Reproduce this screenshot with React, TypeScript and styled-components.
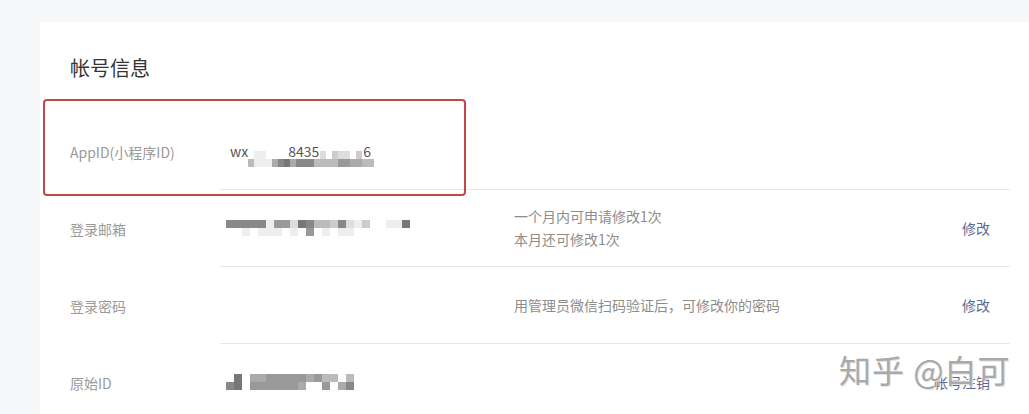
import React from "react";
import styled, { createGlobalStyle } from "styled-components";

const Global = createGlobalStyle`
  html, body { margin: 0; padding: 0; background: #f6f7f9; }
  body { font-family: "Noto Sans CJK SC", "Noto Sans", "Liberation Sans", sans-serif; }
  #root { min-height: 414px; }
`;

const Page = styled.div`
  position: relative;
  display: flex;
  height: 414px;
  overflow: hidden;
  padding: 22px 0 0 40px;
  box-sizing: border-box;
`;

const Card = styled.section`
  position: relative;
  flex: 1;
  background: #ffffff;
  padding: 32px 19px 0 30px;
`;

const Title = styled.h2`
  margin: 0 0 31px;
  font-size: 20px;
  line-height: 28px;
  font-weight: 400;
  color: #353535;
`;

const Row = styled.div`
  display: grid;
  grid-template-columns: 150px 1fr;
  height: 77px;
`;

const Label = styled.div`
  display: flex;
  align-items: center;
  font-size: 14px;
  color: #9a9a9a;
`;

const Content = styled.div`
  display: grid;
  grid-template-columns: 288px 1fr auto;
  align-items: center;
  padding: 0 20px 0 6px;
  border-bottom: 1px solid #e7e7e7;
`;

const Value = styled.div`
  position: relative;
  font-size: 14px;
  color: #353535;
  display: flex;
  align-items: center;
`;

const Tips = styled.div`
  font-size: 14px;
  line-height: 23px;
  color: #8d8d8d;
`;

const Action = styled.a`
  font-size: 14px;
  color: #576b95;
  text-decoration: none;
  cursor: pointer;
`;

const Highlight = styled.div`
  position: absolute;
  left: 3px;
  top: 77px;
  width: 423px;
  height: 97px;
  box-sizing: border-box;
  border: 2px solid #c2484a;
  border-radius: 4px;
  pointer-events: none;
`;

const Watermark = styled.div`
  position: absolute;
  left: 839px;
  top: 349px;
  font-size: 32px;
  line-height: 40px;
  letter-spacing: 1px;
  color: #a9a9a9;
  text-shadow: 1px 1px 0 #e2e2e2, -1px -1px 0 #ffffff;
  white-space: pre;
  pointer-events: none;
`;

const MosaicGrid = styled.div<{ $w: number; $h: number; $cols: number }>`
  display: grid;
  grid-template-columns: repeat(${(p) => p.$cols}, ${(p) => p.$w}px);
  grid-auto-rows: ${(p) => p.$h}px;
`;

const MosaicOverlay = styled(MosaicGrid)`
  position: absolute;
  left: 0;
  top: 10px;
`;

const Cell = styled.span<{ $c: string }>`
  background: ${(p) => (p.$c === " " ? "transparent" : `#${p.$c.repeat(6)}`)};
`;

const Frag = styled.span<{ $ml: number }>`
  margin-left: ${(p) => p.$ml}px;
  color: #555;
  font-size: 14px;
  line-height: 20px;
`;

function cellsOf(rows: string[]) {
  const cols = Math.max(...rows.map((r) => r.length));
  const cells: React.ReactNode[] = [];
  rows.forEach((r, ri) => {
    r.padEnd(cols, " ")
      .split("")
      .forEach((c, ci) => cells.push(<Cell key={`${ri}-${ci}`} $c={c} />));
  });
  return { cols, cells };
}

function Mosaic({ rows, w = 8, h = 8 }: { rows: string[]; w?: number; h?: number }) {
  const { cols, cells } = cellsOf(rows);
  return (
    <MosaicGrid $w={w} $h={h} $cols={cols}>
      {cells}
    </MosaicGrid>
  );
}

function AppIdValue() {
  const { cols, cells } = cellsOf([
    "    ee         d cdd c  ",
    "fffbeeea87a888bbbb99aabb",
  ]);
  return (
    <Value>
      <Frag $ml={4}>wx</Frag>
      <Frag $ml={40}>8435</Frag>
      <Frag $ml={44}>6</Frag>
      <MosaicOverlay $w={6} $h={8} $cols={cols} style={{ left: 4 }}>
        {cells}
      </MosaicOverlay>
    </Value>
  );
}

export default function App() {
  return (
    <>
      <Global />
      <Page>
        <Card>
          <Title>帐号信息</Title>
          <Row>
            <Label>AppID(小程序ID)</Label>
            <Content>
              <AppIdValue />
            </Content>
          </Row>
          <Row>
            <Label>登录邮箱</Label>
            <Content>
              <Value>
                <Mosaic
                  rows={["88888e99d78bbc8dec  ee7", "ffefeeefef9fefeefff    "]}
                />
              </Value>
              <Tips>
                一个月内可申请修改1次
                <br />
                本月还可修改1次
              </Tips>
              <Action>修改</Action>
            </Content>
          </Row>
          <Row>
            <Label>登录密码</Label>
            <Content>
              <Value />
              <Tips>用管理员微信扫码验证后，可修改你的密码</Tips>
              <Action>修改</Action>
            </Content>
          </Row>
          <Row>
            <Label>原始ID</Label>
            <Content>
              <Value>
                <Mosaic rows={[" 7 aa99999a9bb b ", "87 999999a f9 a8 "]} />
              </Value>
              <Tips />
              <Action>帐号注销</Action>
            </Content>
          </Row>
          <Highlight />
        </Card>
        <Watermark>知乎 @白可</Watermark>
      </Page>
    </>
  );
}
